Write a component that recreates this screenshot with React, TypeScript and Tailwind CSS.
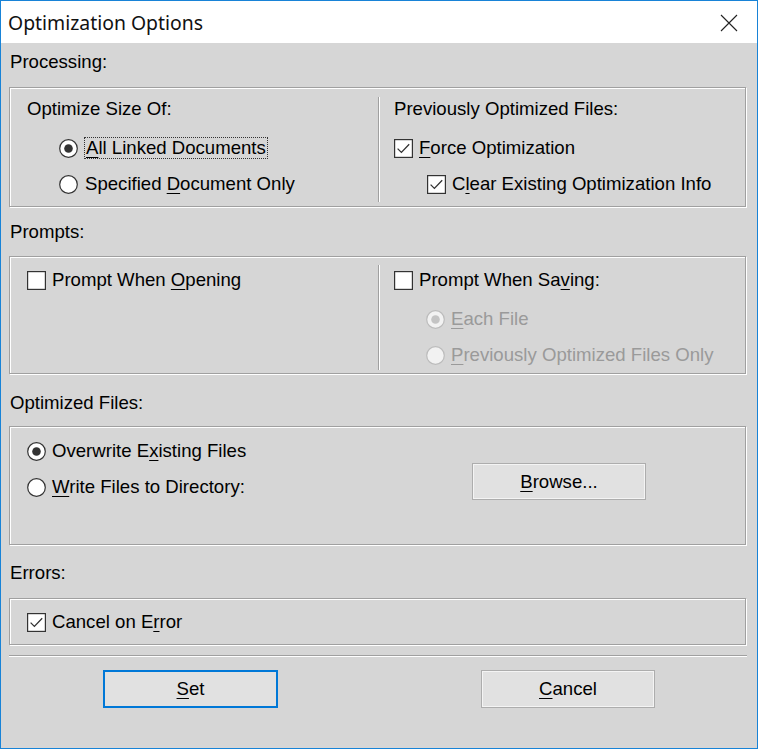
import React from 'react';

const U: React.FC<{ children: React.ReactNode }> = ({ children }) => (
    <span className="underline underline-offset-[3px] decoration-1">{children}</span>
);

const Radio: React.FC<{ checked?: boolean; disabled?: boolean }> = ({ checked, disabled }) => (
    <svg width="19" height="19" viewBox="0 0 19 19" className="shrink-0">
        <circle cx="9.5" cy="9.5" r="8.8" fill={disabled ? '#f2f2f2' : '#ffffff'} stroke={disabled ? '#bcbcbc' : '#333333'} strokeWidth="1.2" />
        {checked && <circle cx="9.5" cy="9.5" r="4.3" fill={disabled ? '#c4c4c4' : '#333333'} />}
    </svg>
);

const Check: React.FC<{ checked?: boolean }> = ({ checked }) => (
    <svg width="19" height="19" viewBox="0 0 19 19" className="shrink-0">
        <rect x="0.6" y="0.6" width="17.8" height="17.8" fill="#ffffff" stroke="#333333" strokeWidth="1.2" />
        {checked && <path d="M3.6 9.6 L7.4 13.4 L15.2 5.2" fill="none" stroke="#333333" strokeWidth="1.3" />}
    </svg>
);

const Row: React.FC<{ children: React.ReactNode; className?: string }> = ({ children, className = '' }) => (
    <div className={`flex items-center h-[36px] gap-[6px] ${className}`}>{children}</div>
);

const Group: React.FC<{ children: React.ReactNode; className?: string }> = ({ children, className = '' }) => (
    <div className={`mx-[8px] w-[737px] border border-[#a0a0a0] shadow-[inset_1px_1px_0_#fff,1px_1px_0_#fff] ${className}`}>
        {children}
    </div>
);

const Divider: React.FC<{ className?: string }> = ({ className = '' }) => (
    <div className={`w-[2px] border-l border-[#a0a0a0] bg-white ${className}`} />
);

const App: React.FC = () => {
    return (
        <div className="w-[758px] h-[749px] border border-[#1883d7] bg-[#d6d6d6] flex flex-col text-black text-[18.6px] leading-[22px] font-['Liberation_Sans',Arial,sans-serif] overflow-hidden">
            {/* title bar */}
            <div className="h-[42px] bg-white flex items-center justify-between shrink-0">
                <span className="pl-[7px] pt-[1px] text-[19.4px] font-['Noto_Sans',sans-serif] text-[#111]">Optimization Options</span>
                <svg width="18" height="18" viewBox="0 0 18 18" className="mr-[19px] mt-[2px]">
                    <path d="M1 1 L17 17 M17 1 L1 17" stroke="#222" strokeWidth="1.1" />
                </svg>
            </div>

            {/* Processing */}
            <div className="pl-[9px] pt-[8px] pb-[14px]">Processing:</div>
            <Group className="h-[120px] flex">
                <div className="w-[368px] pl-[17px] pt-[10px]">
                    <div>Optimize Size Of:</div>
                    <div className="mt-[10px] pl-[32px]">
                        <Row className="gap-[4px]">
                            <Radio checked />
                            <span className="border border-dotted border-[#333] px-[1px] leading-[20px]"><U>A</U>ll Linked Documents</span>
                        </Row>
                        <Row className="gap-[5px]">
                            <Radio />
                            <span className="pl-[1px]">Specified <U>D</U>ocument Only</span>
                        </Row>
                    </div>
                </div>
                <Divider className="mt-[9px] mb-[4px]" />
                <div className="pl-[14px] pt-[10px]">
                    <div>Previously Optimized Files:</div>
                    <div className="mt-[10px]">
                        <Row>
                            <Check checked />
                            <span><U>F</U>orce Optimization</span>
                        </Row>
                        <Row className="pl-[33px]">
                            <Check checked />
                            <span>C<U>l</U>ear Existing Optimization Info</span>
                        </Row>
                    </div>
                </div>
            </Group>

            {/* Prompts */}
            <div className="pl-[9px] pt-[14px] pb-[13px]">Prompts:</div>
            <Group className="h-[118px] flex">
                <div className="w-[368px] pl-[17px] pt-[5px]">
                    <Row>
                        <Check />
                        <span>Prompt When <U>O</U>pening</span>
                    </Row>
                </div>
                <Divider className="mt-[8px] mb-[3px]" />
                <div className="pl-[14px] pt-[5px]">
                    <Row>
                        <Check />
                        <span>Prompt When Sa<U>v</U>ing:</span>
                    </Row>
                    <div className="mt-[3px] pl-[32px] text-[#9a9a9a]">
                        <Row className="gap-[6px]">
                            <Radio checked disabled />
                            <span><U>E</U>ach File</span>
                        </Row>
                        <Row className="gap-[6px]">
                            <Radio disabled />
                            <span><U>P</U>reviously Optimized Files Only</span>
                        </Row>
                    </div>
                </div>
            </Group>

            {/* Optimized Files */}
            <div className="pl-[9px] pt-[18px] pb-[12px]">Optimized Files:</div>
            <Group className="h-[119px] flex">
                <div className="w-[444px] pl-[17px] pt-[6px]">
                    <Row className="gap-[5px]">
                        <Radio checked />
                        <span>Overwrite E<U>x</U>isting Files</span>
                    </Row>
                    <Row className="gap-[5px]">
                        <Radio />
                        <span><U>W</U>rite Files to Directory:</span>
                    </Row>
                </div>
                <div className="pt-[36px] pl-[18px]">
                    <button className="w-[174px] h-[37px] bg-[#e1e1e1] border border-[#adadad] shadow-[inset_0_0_0_1px_#f4f4f4] flex items-center justify-center">
                        <span><U>B</U>rowse...</span>
                    </button>
                </div>
            </Group>

            {/* Errors */}
            <div className="pl-[9px] pt-[17px] pb-[14px]">Errors:</div>
            <Group className="h-[47px] pl-[17px] pt-[5px]">
                <Row>
                    <Check checked />
                    <span>Cancel on E<U>r</U>ror</span>
                </Row>
            </Group>

            <div className="mx-[8px] mt-[10px] w-[738px] h-[2px] border-t border-[#a0a0a0] bg-white" />

            <div className="flex mt-[13px]">
                <button className="ml-[102px] w-[175px] h-[38px] bg-[#e1e1e1] border-2 border-[#0078d7] flex items-center justify-center">
                    <span><U>S</U>et</span>
                </button>
                <button className="ml-[203px] w-[174px] h-[38px] bg-[#e1e1e1] border border-[#adadad] shadow-[inset_0_0_0_1px_#f4f4f4] flex items-center justify-center">
                    <span><U>C</U>ancel</span>
                </button>
            </div>
        </div>
    );
};

export default App;
